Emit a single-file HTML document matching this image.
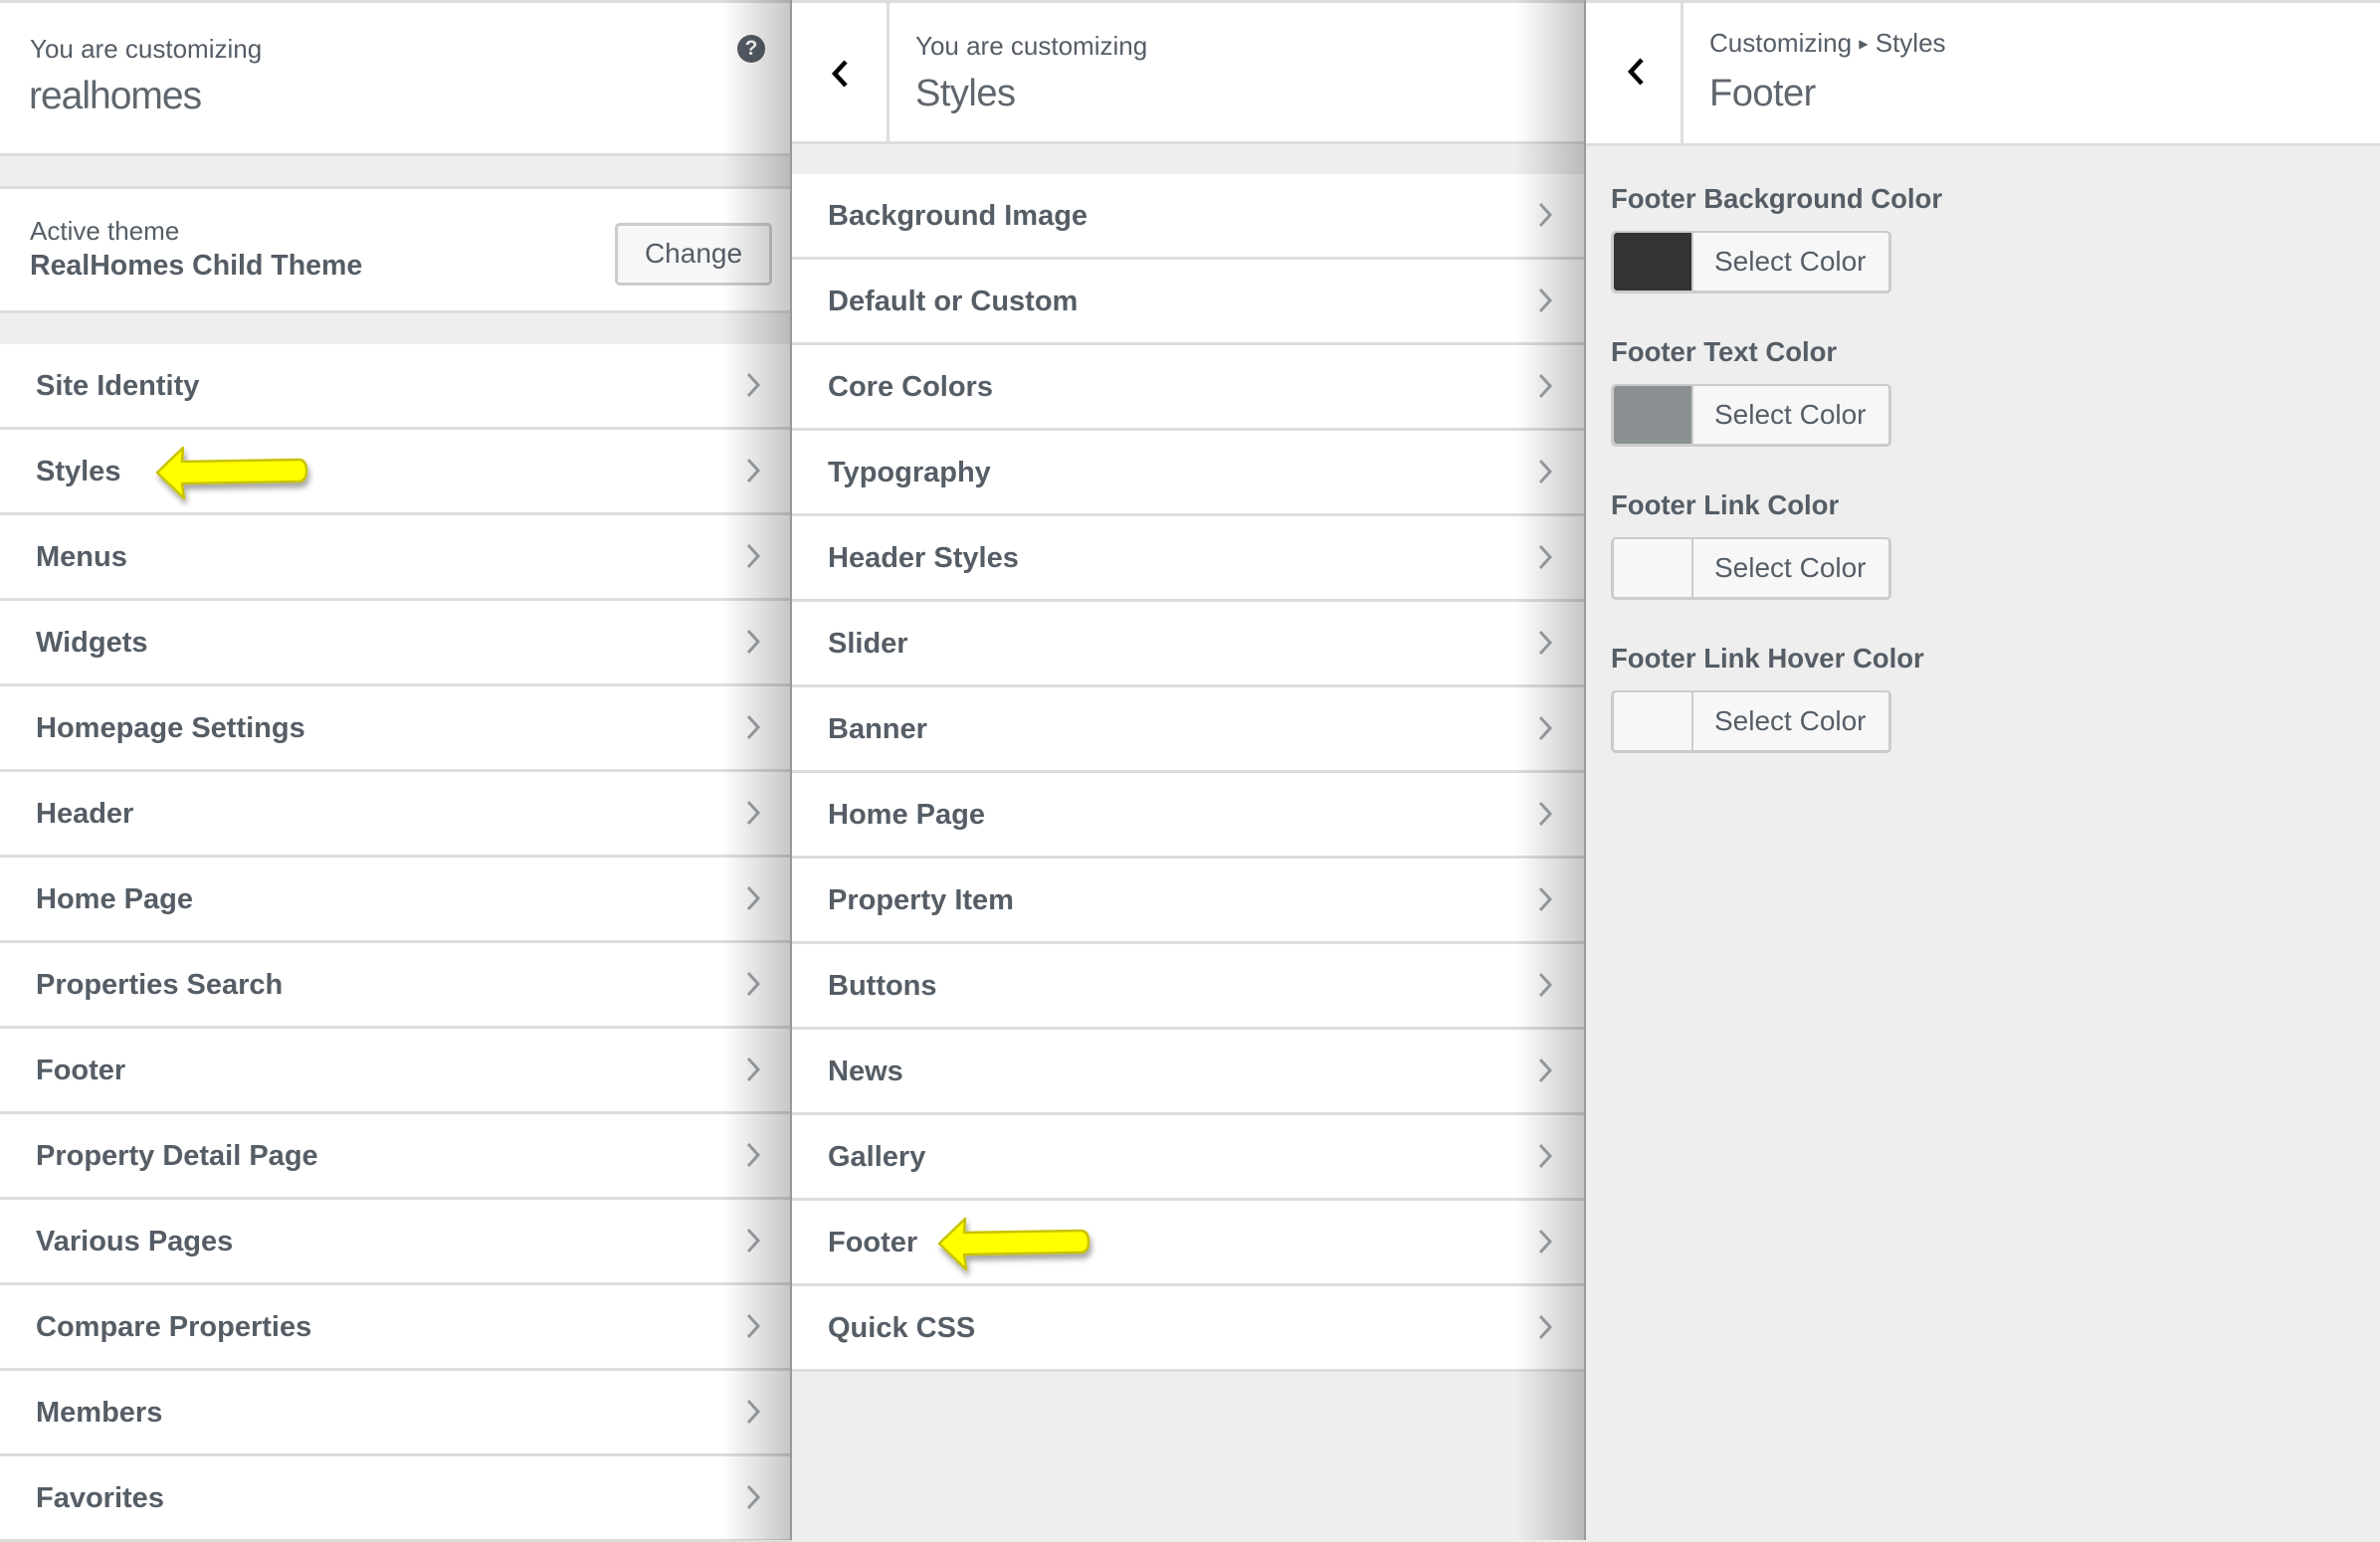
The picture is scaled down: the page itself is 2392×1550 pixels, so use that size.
<!DOCTYPE html>
<html><head><meta charset="utf-8"><style>
*{margin:0;padding:0;box-sizing:border-box}
body{width:2392px;height:1548px;position:relative;overflow:hidden;background:#eee;font-family:"Liberation Sans",sans-serif;color:#555d66}
.p{position:absolute;top:0;height:1548px;background:#eee}
.abs{position:absolute}
.hdr{position:absolute;left:0;right:0;top:0;background:#fff;border-top:3px solid #ddd;border-bottom:3px solid #ddd}
.item{position:absolute;left:0;right:0;height:86px;background:#fff;border-bottom:3px solid #ddd;font-weight:bold;font-size:29px;line-height:84px;color:#555d66}
.item span{position:absolute;left:36px}
.chev{position:absolute;top:28px;width:14px;height:26px}
.sh{position:absolute;top:0;bottom:0;width:70px;background:linear-gradient(to right,rgba(0,0,0,0),rgba(0,0,0,.22));border-right:2px solid #999}
.lbl{position:absolute;left:1619px;font-size:27.5px;font-weight:bold;color:#555d66}
.btn{position:absolute;left:1619px;width:282px;height:63px;background:#f7f7f7;border:3px solid #ccc;border-radius:5px;border-top-width:2px}
.btn .sw{position:absolute;left:0;top:0;bottom:0;width:80px;border-right:2px solid #ccc;border-radius:3px 0 0 3px}
.btn span{position:absolute;left:101px;top:13px;font-size:28px;color:#555d66}
</style></head><body>

<div class="p" style="left:0;width:796px">
  <div class="hdr" style="height:157px">
    <div class="abs" style="left:30px;top:31px;font-size:26px;color:#555d66">You are customizing</div>
    <div class="abs" style="left:29px;top:72px;font-size:39px;color:#5f666d;letter-spacing:-1px">realhomes</div>
    <div class="abs" style="left:741px;top:32px;width:28px;height:28px;border-radius:50%;background:#555d66;color:#fff;font-weight:bold;font-size:21px;text-align:center;line-height:28px">?</div>
  </div>
  <div class="abs" style="left:0;right:0;top:187px;height:128px;background:#fff;border-top:3px solid #ddd;border-bottom:3px solid #ddd">
    <div class="abs" style="left:30px;top:27px;font-size:26px">Active theme</div>
    <div class="abs" style="left:30px;top:61px;font-size:28.5px;font-weight:bold">RealHomes Child Theme</div>
    <div class="abs" style="left:618px;top:34px;width:158px;height:63px;background:#f7f7f7;border:3px solid #ccc;border-radius:5px;font-size:28px;text-align:center;line-height:56px">Change</div>
  </div>
  <div id="l1"></div>
  <div class="sh" style="right:0"></div>
</div>

<div class="p" style="left:796px;width:798px">
  <div class="hdr" style="height:145px">
    <div class="abs" style="left:95px;top:0;bottom:0;border-left:3px solid #ddd"></div>
    <svg class="abs" style="left:38px;top:56px" width="22" height="30" viewBox="0 0 22 30"><path d="M16 3 L5 15 L16 27" fill="none" stroke="#000" stroke-width="4.5"/></svg>
    <div class="abs" style="left:124px;top:28px;font-size:26px">You are customizing</div>
    <div class="abs" style="left:124px;top:70px;font-size:38px;color:#5f666d;letter-spacing:-0.5px">Styles</div>
  </div>
  <div id="l2"></div>
  <div class="sh" style="right:0"></div>
</div>

<div class="p" style="left:1594px;width:798px">
  <div class="hdr" style="height:147px">
    <div class="abs" style="left:95px;top:0;bottom:0;border-left:3px solid #ddd"></div>
    <svg class="abs" style="left:40px;top:54px" width="22" height="30" viewBox="0 0 22 30"><path d="M16 3 L5 15 L16 27" fill="none" stroke="#000" stroke-width="4.5"/></svg>
    <div class="abs" style="left:124px;top:25px;font-size:26px">Customizing <span style="font-size:12px;vertical-align:4px">&#9654;</span> Styles</div>
    <div class="abs" style="left:124px;top:70px;font-size:38px;color:#5f666d;letter-spacing:-0.5px">Footer</div>
  </div>
</div>

<div class="lbl" style="top:184px">Footer Background Color</div>
<div class="btn" style="top:232px"><div class="sw" style="background:#333"></div><span>Select Color</span></div>
<div class="lbl" style="top:338px">Footer Text Color</div>
<div class="btn" style="top:386px"><div class="sw" style="background:#8a9091"></div><span>Select Color</span></div>
<div class="lbl" style="top:492px">Footer Link Color</div>
<div class="btn" style="top:540px"><div class="sw"></div><span>Select Color</span></div>
<div class="lbl" style="top:646px">Footer Link Hover Color</div>
<div class="btn" style="top:694px"><div class="sw"></div><span>Select Color</span></div>

<svg class="abs" style="left:150px;top:440px" width="170" height="70" viewBox="0 0 170 70">
  <defs><filter id="f" x="-20%" y="-30%" width="140%" height="170%"><feDropShadow dx="2" dy="5" stdDeviation="3" flood-color="#000" flood-opacity=".35"/></filter></defs>
  <path filter="url(#f)" d="M8 35 L34 10 L33 24 L150 22 Q158 22 158 33 Q158 44 150 44 L33 46 L35 61 Z" fill="#ffff00" stroke="#c8c200" stroke-width="2.5" stroke-linejoin="round"/>
</svg>
<svg class="abs" style="left:936px;top:1215px" width="170" height="70" viewBox="0 0 170 70">
  <path filter="url(#f)" d="M8 35 L34 10 L33 24 L150 22 Q158 22 158 33 Q158 44 150 44 L33 46 L35 61 Z" fill="#ffff00" stroke="#c8c200" stroke-width="2.5" stroke-linejoin="round"/>
</svg>

<script>
function chev(x){return '<svg class="chev" style="left:'+x+'px" viewBox="0 0 14 26"><path d="M2 2 L12 13 L2 24" fill="none" stroke="#a0a5aa" stroke-width="3"/></svg>';}
var a=["Site Identity","Styles","Menus","Widgets","Homepage Settings","Header","Home Page","Properties Search","Footer","Property Detail Page","Various Pages","Compare Properties","Members","Favorites"];
var h='';a.forEach(function(t,i){h+='<div class="item" style="top:'+(346+i*86)+'px"><span>'+t+'</span>'+chev(750)+'</div>';});
document.getElementById('l1').outerHTML=h;
var b=["Background Image","Default or Custom","Core Colors","Typography","Header Styles","Slider","Banner","Home Page","Property Item","Buttons","News","Gallery","Footer","Quick CSS"];
h='';b.forEach(function(t,i){h+='<div class="item" style="top:'+(175+i*86)+'px"><span>'+t+'</span>'+chev(750)+'</div>';});
document.getElementById('l2').outerHTML=h;
</script>
</body></html>
